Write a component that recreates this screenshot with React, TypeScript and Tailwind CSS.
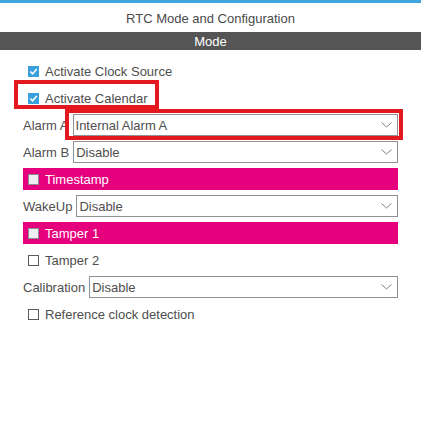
import React from "react";

const font = { fontFamily: '"Liberation Sans", Arial, sans-serif' };

function CheckBox({ checked, tone = "plain" }: { checked?: boolean; tone?: "plain" | "bar" }) {
  if (checked) {
    return (
      <span className="flex h-[11px] w-[11px] shrink-0 items-center justify-center bg-[#3a9fdd]">
        <svg width="9" height="9" viewBox="0 0 9 9">
          <path d="M1.3 4.5 L3.6 6.8 L7.8 2" fill="none" stroke="#fff" strokeWidth="1.5" />
        </svg>
      </span>
    );
  }
  return (
    <span
      className={`block h-[11px] w-[11px] shrink-0 border ${
        tone === "bar" ? "border-[#8a8d90] bg-[#eef0f2]" : "border-[#5a5a5a] bg-white"
      }`}
    />
  );
}

function CheckRow({ label, checked }: { label: string; checked?: boolean }) {
  return (
    <div className="flex h-[22px] items-center gap-[6px] pl-[5px]">
      <CheckBox checked={checked} />
      <span className="pt-[1px]">{label}</span>
    </div>
  );
}

function BarRow({ label }: { label: string }) {
  return (
    <div className="flex h-[22px] items-center gap-[6px] bg-[#e6007e] pl-[5px] text-white">
      <CheckBox tone="bar" />
      <span className="pt-[1px]">{label}</span>
    </div>
  );
}

function SelectRow({ label, value }: { label: string; value: string }) {
  return (
    <div className="flex h-[22px] items-center">
      <span className="shrink-0 pt-[1px]">{label}</span>
      <div className="ml-[4px] flex h-[22px] flex-1 items-center justify-between border border-[#8f9295] bg-white pl-[2px] pr-[5px]">
        <span className="pt-[1px]">{value}</span>
        <svg width="11" height="6" viewBox="0 0 11 6">
          <path d="M0.5 0.5 L5.5 5 L10.5 0.5" fill="none" stroke="#7d7f82" strokeWidth="1" />
        </svg>
      </div>
    </div>
  );
}

export default function App() {
  return (
    <div className="relative h-[432px] w-[421px] bg-white text-[13px] text-[#4e4e4e]" style={font}>
      <div className="h-[3px] bg-[#3ea6dd]" />
      <div className="flex h-[29px] items-center justify-center pt-[2px] text-[#4a4a4a]">RTC Mode and Configuration</div>
      <div className="flex h-[18px] items-center justify-center bg-[#555555] pt-[1px] text-white">Mode</div>

      <div className="flex flex-col gap-[5px] px-[23px] pt-[10px]">
        <CheckRow label="Activate Clock Source" checked />
        <CheckRow label="Activate Calendar" checked />
        <SelectRow label="Alarm A" value="Internal Alarm A" />
        <SelectRow label="Alarm B" value="Disable" />
        <BarRow label="Timestamp" />
        <SelectRow label="WakeUp" value="Disable" />
        <BarRow label="Tamper 1" />
        <CheckRow label="Tamper 2" />
        <SelectRow label="Calibration" value="Disable" />
        <CheckRow label="Reference clock detection" />
      </div>

      {/* highlight annotations */}
      <div className="absolute left-[14px] top-[80px] h-[29px] w-[145px] border-[4px] border-[#e3191f]" />
      <div className="absolute left-[65px] top-[109px] h-[31px] w-[338px] border-[4px] border-[#e3191f]" />
    </div>
  );
}
